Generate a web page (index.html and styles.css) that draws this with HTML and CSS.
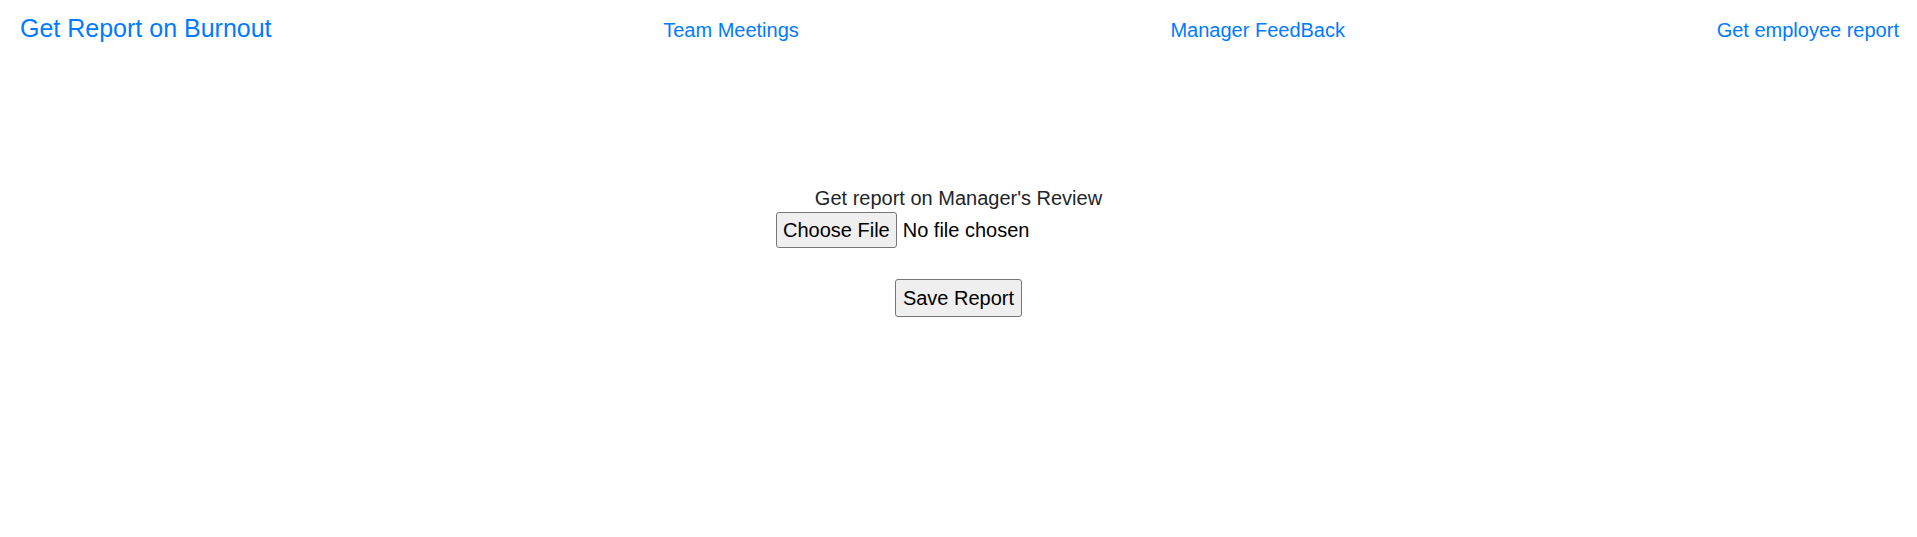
FILE: index.html
```html
<!DOCTYPE html>
<html lang="en">
<head>
<meta charset="utf-8">
<title>Get Report on Burnout</title>
<link rel="stylesheet" href="styles.css">
</head>
<body>
<nav class="navbar">
  <a class="brand" href="#">Get Report on Burnout</a>
  <a class="nav-link" href="#">Team Meetings</a>
  <a class="nav-link" href="#">Manager FeedBack</a>
  <a class="nav-link" href="#">Get employee report</a>
</nav>
<main class="content">
  <form class="report-form">
    <label class="label" for="review">Get report on Manager's Review</label>
    <input class="file-input" id="review" type="file">
    <button class="save-btn" type="button">Save Report</button>
  </form>
</main>
</body>
</html>
```

FILE: styles.css
```css
html, body {
  margin: 0;
  padding: 0;
  background: #ffffff;
}

body {
  font-family: "Liberation Sans", Arial, sans-serif;
  font-size: 20px;
  color: #212529;
  width: 1917px;
  height: 537px;
  overflow: hidden;
}

.navbar {
  display: flex;
  align-items: baseline;
  justify-content: space-between;
  padding: 13px 18px 0 20px;
}

.brand {
  font-size: 25px;
  line-height: 30px;
  color: #007bff;
  text-decoration: none;
  margin-right: 20px;
}

.nav-link {
  font-size: 20px;
  line-height: 30px;
  color: #007bff;
  text-decoration: none;
}

.content {
  display: flex;
  justify-content: center;
  padding-top: 141px;
}

.report-form {
  display: flex;
  flex-direction: column;
  align-items: center;
}

.label {
  font-size: 20px;
  line-height: 24px;
  color: #212529;
}

.file-input {
  margin-top: 2px;
  width: 365px;
  font-family: inherit;
  font-size: 20px;
  line-height: 24px;
  color: #000000;
  padding: 0;
  border: 0;
  background: transparent;
}

.file-input::file-selector-button {
  font-family: inherit;
  font-size: 20px;
  line-height: 24px;
  color: #000000;
  background: #efefef;
  border: 1px solid #767676;
  border-radius: 3px;
  padding: 5px 6px;
  margin: 0 6px 0 0;
}

.save-btn {
  margin-top: 31px;
  font-family: inherit;
  font-size: 20px;
  line-height: 24px;
  color: #000000;
  background: #efefef;
  border: 1px solid #767676;
  border-radius: 3px;
  padding: 6px 7px;
}
```
